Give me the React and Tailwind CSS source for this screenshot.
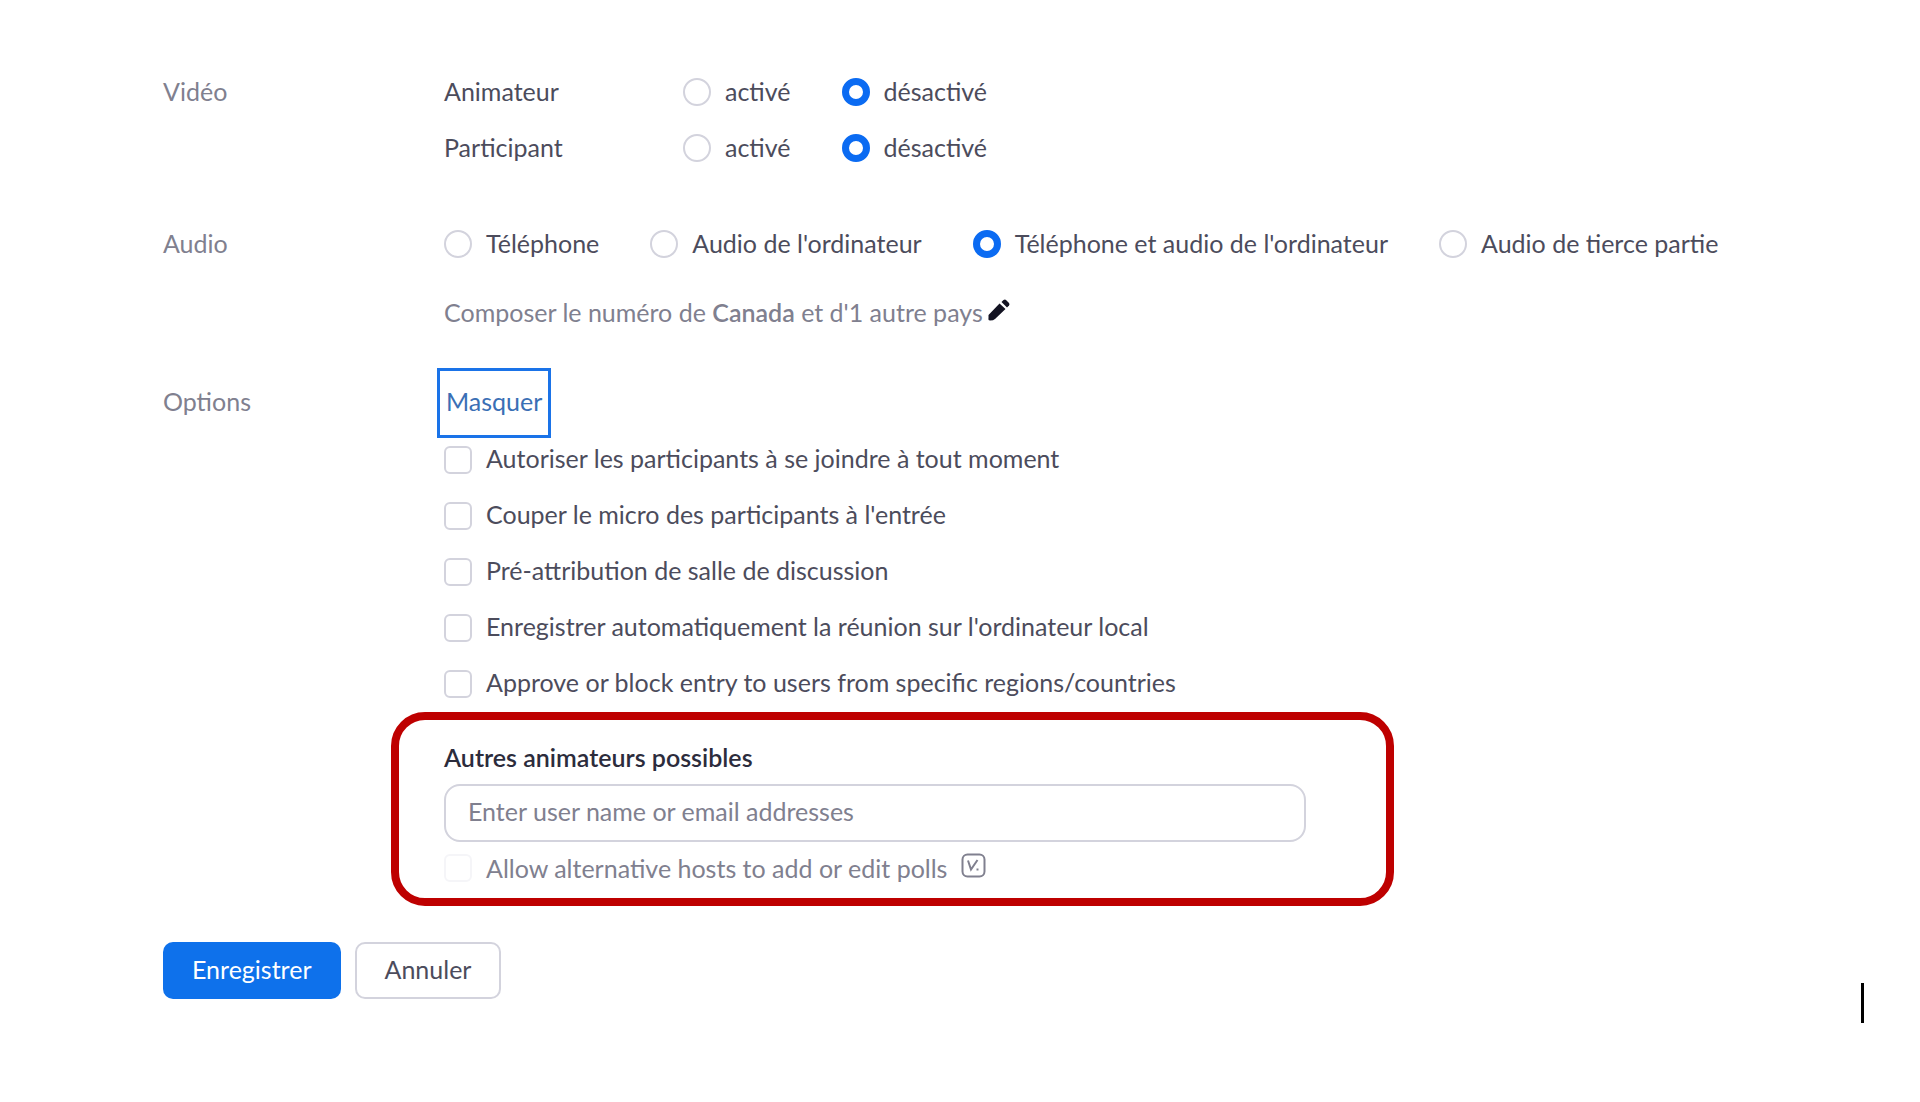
import React, { useState } from 'react';

const SWITCH_CHOICES = ['activé', 'désactivé'];

const AUDIO_CHOICES = [
  'Téléphone',
  "Audio de l'ordinateur",
  "Téléphone et audio de l'ordinateur",
  'Audio de tierce partie'
];

const MEETING_OPTIONS = [
  'Autoriser les participants à se joindre à tout moment',
  "Couper le micro des participants à l'entrée",
  'Pré-attribution de salle de discussion',
  "Enregistrer automatiquement la réunion sur l'ordinateur local",
  'Approve or block entry to users from specific regions/countries'
];

const RadioGroup = ({ name, label, choices, value, onChange }) => (
  <div role="radiogroup" aria-label={label} className="flex flex-wrap gap-x-[51px]">
    {choices.map(choice => (
      <label key={choice} className="flex h-14 items-center gap-3.5 whitespace-nowrap">
        <input
          type="radio"
          name={name}
          checked={value === choice}
          onChange={() => onChange(choice)}
          className="size-7 shrink-0 appearance-none rounded-full border-2 border-[#d3d3dd] bg-white checked:border-[7px] checked:border-[#0b6bf2]"
        />
        <span className="pb-0.5">{choice}</span>
      </label>
    ))}
  </div>
);

const FormRow = ({ label, children }) => (
  <section className="flex">
    <h2 className="flex h-14 w-[281px] shrink-0 items-center pb-0.5 text-[#80808f]">{label}</h2>
    <div className="min-w-0 flex-1">{children}</div>
  </section>
);

const PencilIcon = () => (
  <svg viewBox="0 0 24 24" className="mb-1 size-6" fill="currentColor" aria-hidden="true">
    <path d="M1.5 17 L12.5 5.5 L18.5 11 L8 21 Q6.5 22.5 3 22.5 Q1 22.5 1.5 20 Z" />
    <path d="M14.5 4 L16.5 2 Q18 1 19 2 L22 5 Q23 6 22 7.5 L20 9.5 Z" />
  </svg>
);

// "V." badge next to the polls option
const PollBadge = () => (
  <svg viewBox="0 0 26 26" className="mb-1 size-[26px]" fill="none" stroke="#80808f" aria-hidden="true">
    <rect x="1.5" y="1.5" width="22" height="22" rx="5" strokeWidth="2" />
    <path d="M7 7.5 L10 16.5 L16.5 7" strokeWidth="2" />
    <path d="M15.5 16.5 h2" strokeWidth="2" />
  </svg>
);

export default function App() {
  const [hostVideo, setHostVideo] = useState('désactivé');
  const [guestVideo, setGuestVideo] = useState('désactivé');
  const [audio, setAudio] = useState(AUDIO_CHOICES[2]);
  const [showOptions, setShowOptions] = useState(true);

  return (
    <form
      onSubmit={e => e.preventDefault()}
      className="min-h-screen bg-white pt-16 pr-14 pl-[163px] font-[Lato,sans-serif] text-[25px] leading-8 text-[#4c4c5c]"
    >
      <FormRow label="Vidéo">
        <div className="flex">
          <span className="flex h-14 w-[239px] items-center pb-0.5">Animateur</span>
          <RadioGroup name="host" label="Animateur" choices={SWITCH_CHOICES} value={hostVideo} onChange={setHostVideo} />
        </div>
        <div className="flex">
          <span className="flex h-14 w-[239px] items-center pb-0.5">Participant</span>
          <RadioGroup name="guest" label="Participant" choices={SWITCH_CHOICES} value={guestVideo} onChange={setGuestVideo} />
        </div>
      </FormRow>

      <div className="mt-10">
        <FormRow label="Audio">
          <RadioGroup name="audio" label="Audio" choices={AUDIO_CHOICES} value={audio} onChange={setAudio} />
          <p className="mt-3 flex h-14 items-center gap-1 text-[#80808f]">
            <span>
              Composer le numéro de <strong className="font-semibold">Canada</strong> et d'1 autre pays
            </span>
            <button type="button" aria-label="Modifier" className="text-[#131322]">
              <PencilIcon />
            </button>
          </p>
        </FormRow>
      </div>

      <div className="mt-[34px]">
        <FormRow label="Options">
          <button
            type="button"
            onClick={() => setShowOptions(prev => !prev)}
            className="-mt-1.5 -ml-[7px] block h-[70px] border-[3px] border-[#1a73e8] px-1.5 pb-1 text-[#3a6fb5]"
          >
            {showOptions ? 'Masquer' : 'Afficher'}
          </button>

          {showOptions && (
            <div className="-mt-1.5">
              {MEETING_OPTIONS.map(option => (
                <label key={option} className="flex h-14 items-center gap-3.5">
                  <input
                    type="checkbox"
                    className="size-7 shrink-0 appearance-none rounded-md border-2 border-[#d3d3dd] bg-white checked:bg-[#0b6bf2]"
                  />
                  <span className="pb-1">{option}</span>
                </label>
              ))}
            </div>
          )}

          {/* Alternative hosts */}
          <div className="-ml-[53px] max-w-[1003px] rounded-[34px] border-8 border-[#be0000] pt-[18px] pr-20 pb-1 pl-[45px]">
            <label htmlFor="alt-hosts" className="flex h-10 items-center pb-0.5 font-semibold text-[#2c2c3c]">
              Autres animateurs possibles
            </label>
            <input
              id="alt-hosts"
              type="text"
              placeholder="Enter user name or email addresses"
              className="mt-1.5 h-[58px] w-full rounded-2xl border-2 border-[#d3d3dd] px-[22px] pb-1 placeholder:text-[#80808f]"
            />
            <label className="flex h-[52px] items-center gap-3.5 text-[#80808f]">
              <input
                type="checkbox"
                disabled
                className="size-7 shrink-0 appearance-none rounded-md border-2 border-[#f5f5f8] bg-white"
              />
              Allow alternative hosts to add or edit polls
              <PollBadge />
            </label>
          </div>
        </FormRow>
      </div>

      <footer className="mt-9 flex items-start gap-3.5">
        <button type="submit" className="h-[57px] rounded-[10px] bg-[#0e71eb] px-[29px] pb-1 text-white">
          Enregistrer
        </button>
        <button type="button" className="h-[57px] rounded-[10px] border-2 border-[#d3d3dd] bg-white px-7 pb-1">
          Annuler
        </button>
        <span className="mt-[41px] ml-auto h-10 w-[3px] bg-black" />
      </footer>
    </form>
  );
}
